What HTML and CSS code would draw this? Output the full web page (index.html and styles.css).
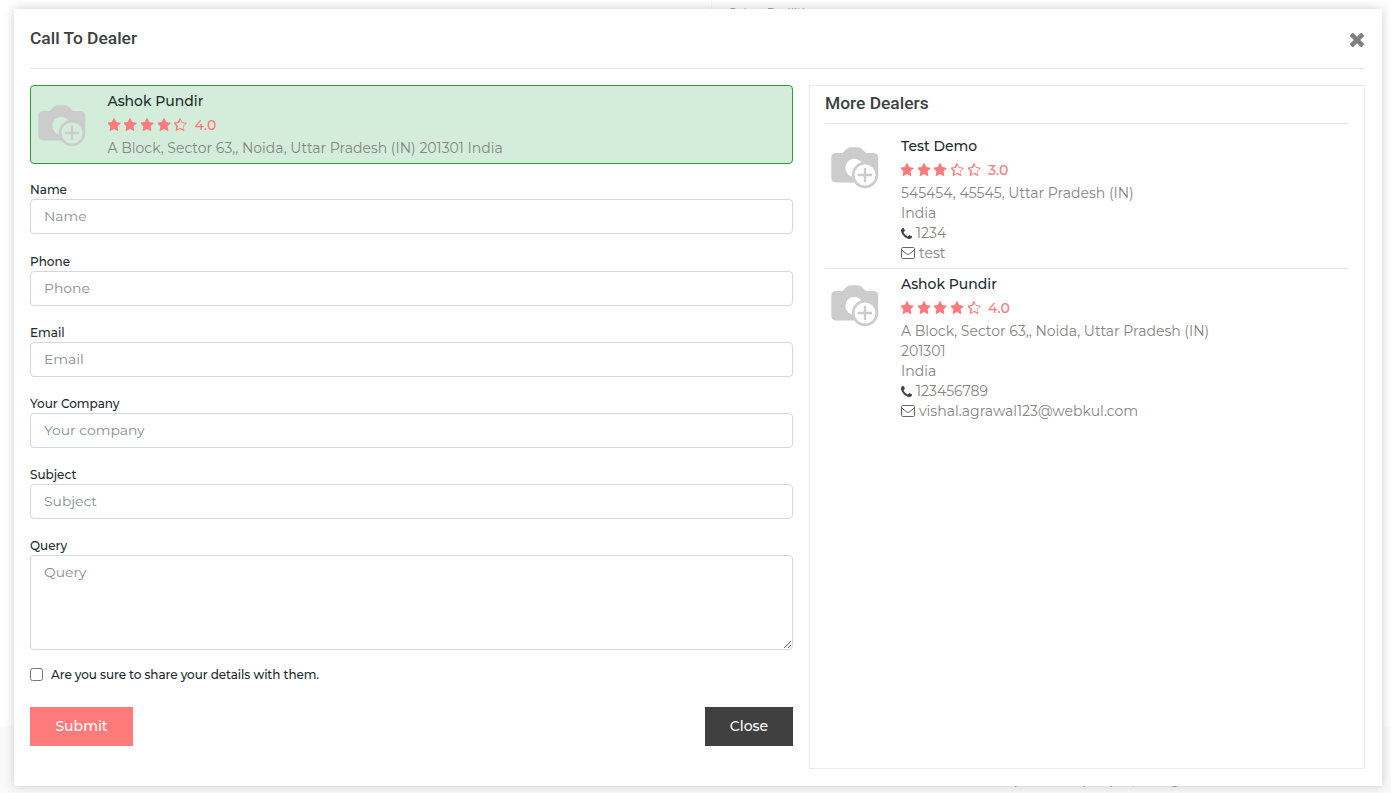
FILE: index.html
```html
<!DOCTYPE html>
<html lang="en">
<head>
<meta charset="utf-8">
<title>Call To Dealer</title>
<link rel="stylesheet" href="styles.css">
</head>
<body>
<svg class="sprite" aria-hidden="true">
  <mask id="lens" maskUnits="userSpaceOnUse" x="0" y="0" width="48" height="42"><path fill="#fff" d="M0 0h48v42H0z"/><circle cx="23.300" cy="20.800" r="9" fill="#000"/><circle cx="34" cy="28" r="13.200" fill="#fff"/><circle cx="34" cy="28" r="10.500" fill="#000"/><path fill="#fff" d="M32.800 21h2.400v5.800H41v2.400h-5.800V35h-2.400v-5.800H27v-2.400h5.800z"/></mask>
  <symbol id="star" viewBox="128 32 1536 1590"><path d="M1664 647q0 22-26 48l-363 354 86 500q1 7 1 20 0 21-10.500 35.500t-30.500 14.500q-19 0-40-12l-449-236-449 236q-22 12-40 12-21 0-31.500-14.500t-10.500-35.500q0-6 2-20l86-500-364-354q-25-27-25-48 0-37 56-46l502-73 225-455q19-41 49-41t49 41l225 455 502 73q56 9 56 46z"/></symbol>
  <symbol id="star-o" viewBox="128 32 1536 1590"><path d="M1201 1004l306-297-422-62-189-382-189 382-422 62 306 297-73 421 378-199 377 199zm463-357q0 22-26 48l-363 354 86 500q1 7 1 20 0 50-41 50-19 0-40-12l-449-236-449 236q-22 12-40 12-21 0-31.500-14.500t-10.500-35.500q0-6 2-20l86-500-364-354q-25-27-25-48 0-37 56-46l502-73 225-455q19-41 49-41t49 41l225 455 502 73q56 9 56 46z"/></symbol>
  <symbol id="phone" viewBox="192 128 1408 1408"><path d="M1600 1240q0 27-10 70.500t-21 68.500q-21 50-122 106-94 51-186 51-27 0-52.500-3.500t-57.500-12.500-47.500-14.500-55.500-20.500-49-18q-98-35-175-83-128-79-264.500-215.500t-215.500-264.500q-48-77-83-175-3-9-18-49t-20.500-55.500-14.500-47.500-12.500-57.500-3.500-52.500q0-92 51-186 56-101 106-122 25-11 68.500-21t70.500-10q14 0 21 3 18 6 53 76 11 19 30 54t35 63.500 31 53.500q3 4 17.500 25t21.500 35.500 7 28.500q0 20-28.500 50t-62 55-62 53-28.500 46q0 9 5 22.500t8.500 20.500 14 24 11.500 19q76 137 174 235t235 174q2 1 19 11.500t24 14 20.500 8.500 22.500 5q18 0 46-28.500t53-62 55-62 50-28.500q14 0 28.500 7t35.500 21.500 25 17.500q25 15 53.500 31t63.500 35 54 30q70 35 76 53 3 7 3 21z"/></symbol>
  <symbol id="mail" viewBox="0 0 14 12"><g fill="none" stroke="currentColor" stroke-linejoin="round"><rect x=".5" y=".5" width="13" height="11" rx="1.200"/><path d="M.7 3 5.200 6.700Q7 8.200 8.800 6.700L13.300 3"/></g></symbol>
  <symbol id="times" viewBox="302 366 1188 1188"><path d="M1490 1322q0 40-28 68l-136 136q-28 28-68 28t-68-28l-294-294-294 294q-28 28-68 28t-68-28l-136-136q-28-28-28-68t28-68l294-294-294-294q-28-28-28-68t28-68l136-136q28-28 68-28t68 28l294 294 294-294q28-28 68-28t68 28l136 136q28 28 28 68t-28 68l-294 294 294 294q28 28 28 68z"/></symbol>
  <symbol id="camera" viewBox="0 0 48 42"><g mask="url(#lens)"><path d="M5 6H11.500L15.500 2Q17.300.2 19.500.2H27Q29.200.2 31 2L35 6H42Q47.200 6 47.200 11V30L34 35.500H5.500Q.3 35.500.3 30.500V11Q.3 6 5 6Z"/><circle cx="34" cy="28" r="13.200"/></g></symbol>
</svg>
<div class="backdrop-rule"></div>
<div class="backdrop-text backdrop-top">Sabre Redlitl</div>
<div class="backdrop-text backdrop-bottom">Experience people, things</div>
<main class="modal">
  <header class="modal-header">
    <h1 class="title">Call To Dealer</h1>
    <button class="dismiss" aria-label="Close"><svg><use href="#times"/></svg></button>
  </header>
  <div class="columns">
    <form class="form">
      <section class="dealer selected">
        <svg class="photo"><use href="#camera"/></svg>
        <div>
          <h2 class="name">Ashok Pundir</h2>
          <div class="rating"><svg><use href="#star"/></svg><svg><use href="#star"/></svg><svg><use href="#star"/></svg><svg><use href="#star"/></svg><svg><use href="#star-o"/></svg><span>4.0</span></div>
          <p class="line">A Block, Sector 63,, Noida, Uttar Pradesh (IN) 201301 India</p>
        </div>
      </section>
      <label class="field"><span>Name</span><input type="text" placeholder="Name"></label>
      <label class="field"><span>Phone</span><input type="text" placeholder="Phone"></label>
      <label class="field"><span>Email</span><input type="text" placeholder="Email"></label>
      <label class="field"><span>Your Company</span><input type="text" placeholder="Your company"></label>
      <label class="field"><span>Subject</span><input type="text" placeholder="Subject"></label>
      <label class="field"><span>Query</span><textarea placeholder="Query"></textarea></label>
      <label class="consent"><input type="checkbox"><span>Are you sure to share your details with them.</span></label>
      <div class="actions">
        <button type="button" class="btn submit">Submit</button>
        <button type="button" class="btn close">Close</button>
      </div>
    </form>
    <aside class="more">
      <h2 class="more-title">More Dealers</h2>
      <article class="dealer">
        <svg class="photo"><use href="#camera"/></svg>
        <div>
          <h3 class="name">Test Demo</h3>
          <div class="rating"><svg><use href="#star"/></svg><svg><use href="#star"/></svg><svg><use href="#star"/></svg><svg><use href="#star-o"/></svg><svg><use href="#star-o"/></svg><span>3.0</span></div>
          <p class="line">545454, 45545, Uttar Pradesh (IN)</p>
          <p class="line">India</p>
          <p class="line"><svg class="phone"><use href="#phone"/></svg>1234</p>
          <p class="line"><svg class="mail"><use href="#mail"/></svg>test</p>
        </div>
      </article>
      <article class="dealer">
        <svg class="photo"><use href="#camera"/></svg>
        <div>
          <h3 class="name">Ashok Pundir</h3>
          <div class="rating"><svg><use href="#star"/></svg><svg><use href="#star"/></svg><svg><use href="#star"/></svg><svg><use href="#star"/></svg><svg><use href="#star-o"/></svg><span>4.0</span></div>
          <p class="line">A Block, Sector 63,, Noida, Uttar Pradesh (IN)</p>
          <p class="line">201301</p>
          <p class="line">India</p>
          <p class="line"><svg class="phone"><use href="#phone"/></svg>123456789</p>
          <p class="line"><svg class="mail"><use href="#mail"/></svg>vishal.agrawal123@webkul.com</p>
        </div>
      </article>
    </aside>
  </div>
</main>
</body>
</html>
```
FILE: styles.css
```css
* { box-sizing: border-box; }
body {
  margin: 0;
  height: 793px;
  overflow: hidden;
  padding: 9px 9px 7px 14px;
  background: linear-gradient(#fff 726px, #fafafa 726px);
  font-family: Montserrat, Inter, "Open Sans", sans-serif;
  color: #202a2e;
}
h1, h2, h3, p { margin: 0; font-weight: 500; }
svg { fill: currentColor; flex: none; }
.sprite { position: absolute; width: 0; height: 0; }

/* page content showing behind the dialog */
.backdrop-text { position: absolute; font-size: 12px; line-height: 14px; color: #999; white-space: nowrap; }
.backdrop-top { left: 729px; top: 5px; }
.backdrop-bottom { left: 997px; top: 774px; letter-spacing: 1.400px; }
.backdrop-rule { position: absolute; left: 711px; top: 0; width: 1px; height: 9px; background: #f6f6f6; }

.modal {
  position: relative;
  height: 777px;
  width: 1368px;
  padding: 0 17px 16px 16px;
  background: #fff;
  box-shadow: 0 0 10px rgba(0, 0, 0, .2);
}
.modal-header {
  display: flex;
  justify-content: space-between;
  height: 60px;
  border-bottom: 1px solid #e2e4e6;
}
.title, .more-title { font: 500 17.400px/24px Roboto, sans-serif; color: #3c4043; }
.title { padding-top: 17px; }
.dismiss { margin: 23px 0 0; padding: 0; width: 15px; height: 15px; border: 0; background: none; color: #7f7f7f; }
.dismiss svg { display: block; width: 14px; height: 14px; }

.columns { display: grid; grid-template-columns: 763px 556px; gap: 16px; padding-top: 16px; }

.dealer { display: flex; gap: 22px; }
.photo { width: 48px; height: 42px; color: #ccc; }
.name { font-size: 13.950px; line-height: 20px; }
.rating { display: flex; align-items: center; gap: 3.700px; height: 27px; font-size: 14px; font-weight: 500; color: #ff7a7a; }
.rating svg { width: 13px; height: 13px; }
.rating span { margin-left: 3.500px; }
.line { display: flex; align-items: center; height: 20px; font-size: 14.030px; font-weight: 400; color: #858585; white-space: nowrap; }
.phone { width: 11px; height: 11px; margin-right: 4px; color: #444; }
.mail { width: 14px; height: 12px; margin-right: 4px; color: #666; }

.selected { gap: 21.500px; height: 79px; padding: 5px 7px; border: 1px solid #28a035; border-radius: 4px; background: #d4edda; }
.selected .photo { margin-top: 14px; }

.form { display: flex; flex-direction: column; }
.field { display: block; margin-top: 18.200px; font-size: 12px; font-weight: 500; line-height: 18px; }
.selected + .field { margin-top: 17.400px; }
.field > span { display: block; width: max-content; }
.field input, .field textarea {
  display: block;
  width: 100%;
  height: 35px;
  padding: 6px 13px 7px;
  border: 1px solid #d2d8de;
  border-radius: 4px;
  background: #fff;
  font: 400 13.900px/21px Montserrat, Inter, sans-serif;
}
.field textarea { height: 95px; }
::placeholder { color: #868d94; opacity: 1; }
.consent { display: flex; align-items: center; gap: 8px; margin-top: 14px; height: 20px; font-size: 12px; font-weight: 500; letter-spacing: -.08px; }
.consent input { width: 13px; height: 13px; margin: 0; }
.actions { display: flex; justify-content: space-between; margin-top: 23px; }
.btn { height: 39px; border: 0; padding: 0 0 1px; font: 500 14px Montserrat, Inter, sans-serif; color: #fff; }
.submit { width: 103px; background: #ff7a7a; }
.close { width: 88px; background: #404040; }

.more { height: 684px; padding: 0 15px; border: 1px solid #ebebeb; }
.more-title { height: 38px; padding-top: 5px; border-bottom: 1px solid #e6e6e6; }
.more .dealer { padding: 5px 6px; }
.more-title + .dealer { padding-top: 12px; border-bottom: 1px solid #e6e6e6; }
.more .photo { margin-top: 10.500px; }
```
